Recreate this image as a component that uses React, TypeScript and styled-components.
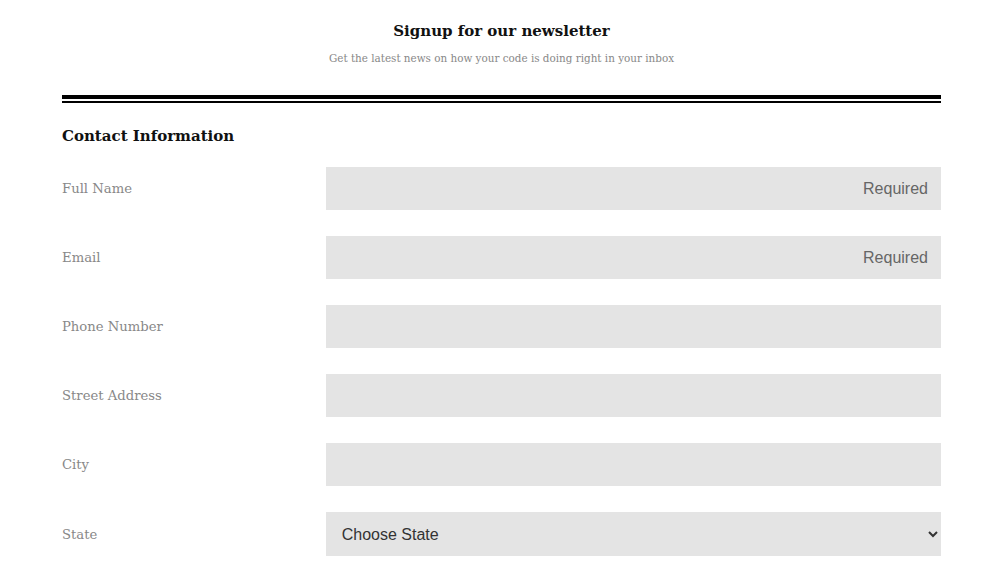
import React from "react";
import styled, { createGlobalStyle } from "styled-components";

const Global = createGlobalStyle`
  html, body { margin: 0; padding: 0; background: #fff; }
  body { font-family: "DejaVu Serif", "Liberation Serif", serif; }
  * { box-sizing: border-box; }
`;

const Page = styled.div`
  width: 879px;
  margin: 0 auto 0 62px;
`;

const Header = styled.header`
  text-align: center;
  padding-top: 20px;
`;

const Title = styled.h1`
  margin: 0;
  font-size: 15px;
  font-weight: bold;
  color: #111;
  line-height: 22px;
`;

const Subtitle = styled.p`
  margin: 8px 0 0;
  font-size: 10.4px;
  color: #888;
  line-height: 16px;
`;

const Rule = styled.div`
  margin-top: 29px;
  border-top: 4px solid #000;
  border-bottom: 2px solid #000;
  height: 8px;
`;

const SectionTitle = styled.h2`
  margin: 22px 0 0;
  font-size: 15px;
  font-weight: bold;
  color: #111;
  line-height: 22px;
`;

const Form = styled.form`
  margin-top: 20px;
  display: flex;
  flex-direction: column;
  gap: 26px;
`;

const Row = styled.div`
  display: grid;
  grid-template-columns: 30% 70%;
  align-items: center;
`;

const Label = styled.label`
  font-size: 13.2px;
  color: #888;
`;

const Input = styled.input`
  height: 43px;
  border: none;
  outline: none;
  background: #e4e4e4;
  font-family: "Liberation Sans", Arial, sans-serif;
  font-size: 16px;
  padding: 0 13px;
  text-align: right;
  color: #333;
  width: 100%;
  &::placeholder { color: #666; }
`;

const Select = styled.select`
  height: 44px;
  border: none;
  outline: none;
  background: #e4e4e4;
  font-family: "Liberation Sans", Arial, sans-serif;
  font-size: 16px;
  padding: 0 12px;
  color: #333;
  width: 100%;
`;

const fields: { label: string; required?: boolean }[] = [
  { label: "Full Name", required: true },
  { label: "Email", required: true },
  { label: "Phone Number" },
  { label: "Street Address" },
  { label: "City" },
];

export default function App() {
  return (
    <Page>
      <Global />
      <Header>
        <Title>Signup for our newsletter</Title>
        <Subtitle>Get the latest news on how your code is doing right in your inbox</Subtitle>
      </Header>
      <Rule />
      <SectionTitle>Contact Information</SectionTitle>
      <Form>
        {fields.map((f) => (
          <Row key={f.label}>
            <Label>{f.label}</Label>
            <Input placeholder={f.required ? "Required" : ""} />
          </Row>
        ))}
        <Row>
          <Label>State</Label>
          <Select defaultValue="">
            <option value="">Choose State</option>
          </Select>
        </Row>
      </Form>
    </Page>
  );
}
